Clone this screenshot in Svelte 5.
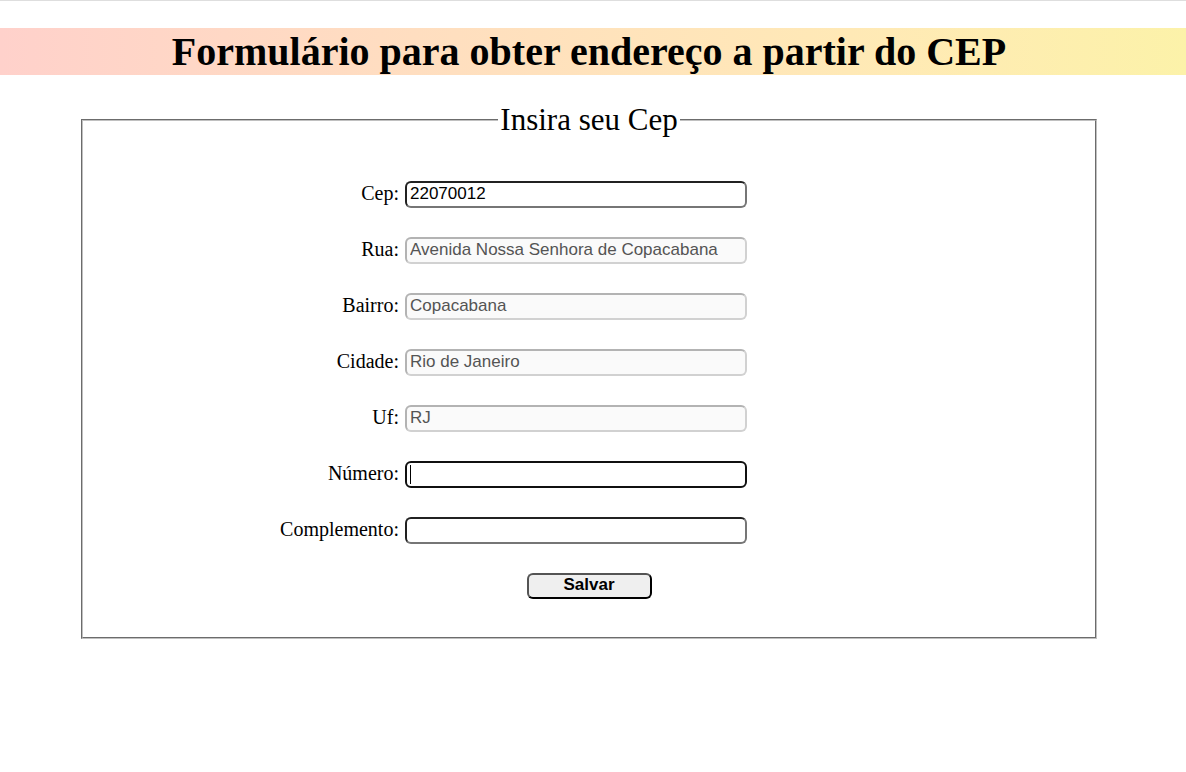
<script>
  import { onMount } from 'svelte';

  let fields = $state([
    { id: 'cep', label: 'Cep:', value: '22070012', disabled: false },
    { id: 'rua', label: 'Rua:', value: 'Avenida Nossa Senhora de Copacabana', disabled: true },
    { id: 'bairro', label: 'Bairro:', value: 'Copacabana', disabled: true },
    { id: 'cidade', label: 'Cidade:', value: 'Rio de Janeiro', disabled: true },
    { id: 'uf', label: 'Uf:', value: 'RJ', disabled: true },
    { id: 'numero', label: 'Número:', value: '', disabled: false },
    { id: 'complemento', label: 'Complemento:', value: '', disabled: false }
  ]);

  onMount(() => document.getElementById('numero').focus());
</script>

<main>
  <h1>Formulário para obter endereço a partir do CEP</h1>
  <form onsubmit={(event) => event.preventDefault()}>
    <fieldset>
      <legend>Insira seu Cep</legend>
      {#each fields as field (field.id)}
        <div class="row">
          <label for={field.id}>{field.label}</label>
          <input id={field.id} type="text" bind:value={field.value} disabled={field.disabled} />
        </div>
      {/each}
      <button type="submit">Salvar</button>
    </fieldset>
  </form>
</main>

<style>
  :global(body) {
    margin: 0;
    background: #fff;
  }
  main {
    border-top: 1px solid #dedede;
    font-family: "Liberation Serif", "Times New Roman", serif;
    color: #000;
  }
  h1 {
    margin: 27px 0 0;
    padding-right: 8px;
    font-size: 40px;
    line-height: 47px;
    text-align: center;
    background: linear-gradient(to right, #ffd1cb, #ffdec0 35%, #ffeab5 75%, #fcf2a9);
  }
  form {
    margin: 27px 89px 0 81px;
  }
  fieldset {
    margin: 0;
    padding: 44px 0 38px;
    border: 2px groove #c0c0c0;
    display: flex;
    flex-direction: column;
    align-items: center;
  }
  legend {
    margin: 0 auto;
    padding: 0 2px;
    font-size: 31px;
    line-height: 35px;
  }
  .row {
    width: 100%;
    display: grid;
    grid-template-columns: 316px 342px;
    column-gap: 6px;
    align-items: start;
    margin-bottom: 29px;
  }
  label {
    font-size: 20px;
    line-height: 24px;
    text-align: right;
  }
  input {
    box-sizing: border-box;
    width: 100%;
    height: 27px;
    padding: 0 3px 2px;
    border: 2px inset #767676;
    border-radius: 6px;
    font: 17px "Liberation Sans", Arial, sans-serif;
    outline: none;
  }
  input:disabled {
    border-color: rgba(118, 118, 118, 0.3);
    border-top-color: rgba(17, 17, 17, 0.3);
    border-left-color: rgba(17, 17, 17, 0.3);
    border-style: solid;
    background: #fafafa;
    color: #545454;
  }
  input:focus {
    border: 2px solid #101010;
  }
  #numero:focus {
    caret-color: transparent;
    background: linear-gradient(#000, #000) 3px 2px / 1px 19px no-repeat #fff;
  }
  button {
    width: 125px;
    height: 26px;
    padding: 0 0 2px;
    border: 2px outset #000;
    border-radius: 6px;
    background: #efefef;
    color: #000;
    font: bold 17px "Liberation Sans", Arial, sans-serif;
  }
</style>
